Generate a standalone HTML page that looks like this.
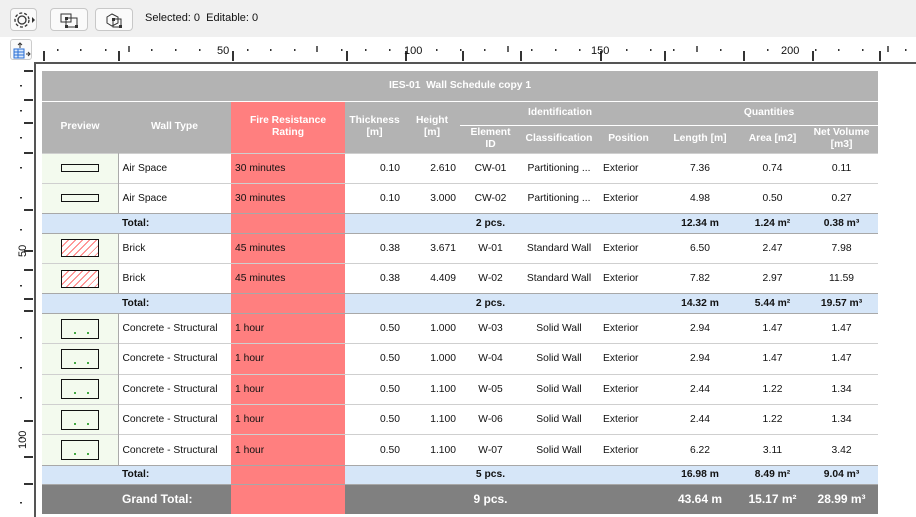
<!DOCTYPE html>
<html><head><meta charset="utf-8"><style>
*{margin:0;padding:0;box-sizing:border-box}
body{width:916px;height:517px;overflow:hidden;background:#fff;font-family:"Liberation Sans",Arial,sans-serif;font-size:11px;color:#111;position:relative}
.tb{position:absolute;left:0;top:0;width:916px;height:37px;background:#f0f0f0}
.btn{position:absolute;top:8px;height:23px;border:1px solid #c8c8c8;border-radius:4px;background:#fafafa}
.abs{position:absolute}
table{position:absolute;left:42px;top:71px;border-collapse:collapse;table-layout:fixed;width:836px}
td{padding:0 4px;white-space:nowrap;overflow:hidden;font-size:10.3px}
.h td{background:#b3b3b3;color:#fff;font-weight:bold;text-align:center;line-height:12px}
.d td{height:30.4px;border-top:1px solid #cfcfcf;background:#fff}
.d td.p{background:#f3faee;border-right:1px solid #aaa;text-align:center}
.t td{height:19.4px;background:#d6e6f8;border-top:1px solid #a8a8a8;font-weight:bold;border-bottom:1px solid #a8a8a8}
.g td{height:29px;background:#808080;color:#fff;font-weight:bold;font-size:12px;border-top:1px solid #fff}
.h td.f,.d td.f,.t td.f,.g td.f{background:#ff7f7f}
.c{text-align:center}.r{text-align:right}
.pos{padding-left:6px}
.sw{display:inline-block;width:38px;height:8px;border:1.5px solid #111;vertical-align:middle}
.br{display:inline-block;width:38px;height:18px;border:1.5px solid #111;vertical-align:middle;background:repeating-linear-gradient(135deg,#fff 0 4px,#f77 4px 5px)}
.cn{display:inline-block;width:38px;height:20px;border:1.5px solid #111;vertical-align:middle;position:relative}
.cn:after{content:"";position:absolute;left:12px;top:12px;width:2px;height:2px;background:#4a4;box-shadow:13px 0 #4a4}
</style></head><body>
<div class="tb">
 <div class="btn" style="left:10px;width:27px;"><svg width="27" height="23" viewBox="0 0 27 23"><circle cx="11" cy="11" r="4" fill="none" stroke="#333" stroke-width="1.3"/><circle cx="11" cy="11" r="7" fill="none" stroke="#333" stroke-width="1.3" stroke-dasharray="3 2"/><path d="M21 8l3 3-3 3z" fill="#333"/></svg></div>
 <div class="btn" style="left:50px;width:38px;"><svg width="38" height="23"><rect x="10" y="5" width="10" height="8" fill="none" stroke="#333"/><rect x="15" y="9" width="11" height="9" fill="none" stroke="#333"/><rect x="14" y="8" width="3" height="3" fill="#333"/><rect x="24" y="16" width="3" height="3" fill="#333"/><rect x="14" y="16" width="3" height="3" fill="#333"/></svg></div>
 <div class="btn" style="left:95px;width:38px;"><svg width="38" height="23"><path d="M11 8l5-3 6 3v6l-6 3-5-3z" fill="none" stroke="#333"/><rect x="17" y="10" width="8" height="8" fill="none" stroke="#333"/><rect x="16" y="9" width="3" height="3" fill="#333"/><rect x="23" y="16" width="3" height="3" fill="#333"/></svg></div>
 <div class="abs" style="left:145px;top:12px;font-size:11px">Selected: 0&nbsp; Editable: 0</div>
</div>
<div class="abs" style="left:10px;top:39px;width:22px;height:21px;border:1px solid #ccc;border-radius:3px;background:#fafafa"><svg width="22" height="21"><path d="M9 3v5M7 5l2-2 2 2" stroke="#333" fill="none"/><rect x="3" y="9" width="10" height="9" fill="#dbe9fb" stroke="#2a6fd6"/><path d="M3 12h10M3 15h10M7 9v9" stroke="#2a6fd6"/><path d="M15 14h4M17 12l2 2-2 2" stroke="#333" fill="none"/></svg></div>
<svg class="abs" style="left:0;top:37px" width="916" height="480">
 <g stroke="#333" stroke-width="2">
  <path d="M44 14v10M119 14v10M233 14v10M347 14v10M406 14v10M463 14v10M521 14v10M601 14v10M665 14v10M744 14v10M813 14v10M880 14v10"/>
 </g>
 <g stroke="#333" stroke-width="1.5">
  <path d="M129 9v6M317 9v6M508 9v6M697 9v6M888 9v6"/>
 </g>
 <g fill="#333">
  <rect x="57" y="12" width="1.5" height="2"/><rect x="80" y="12" width="1.5" height="2"/><rect x="105" y="12" width="1.5" height="2"/><rect x="151" y="12" width="1.5" height="2"/><rect x="175" y="12" width="1.5" height="2"/><rect x="199" y="12" width="1.5" height="2"/><rect x="247" y="12" width="1.5" height="2"/><rect x="270" y="12" width="1.5" height="2"/><rect x="294" y="12" width="1.5" height="2"/><rect x="341" y="12" width="1.5" height="2"/><rect x="365" y="12" width="1.5" height="2"/><rect x="389" y="12" width="1.5" height="2"/><rect x="436" y="12" width="1.5" height="2"/><rect x="460" y="12" width="1.5" height="2"/><rect x="484" y="12" width="1.5" height="2"/><rect x="531" y="12" width="1.5" height="2"/><rect x="555" y="12" width="1.5" height="2"/><rect x="579" y="12" width="1.5" height="2"/><rect x="626" y="12" width="1.5" height="2"/><rect x="650" y="12" width="1.5" height="2"/><rect x="673" y="12" width="1.5" height="2"/><rect x="720" y="12" width="1.5" height="2"/><rect x="767" y="12" width="1.5" height="2"/><rect x="815" y="12" width="1.5" height="2"/><rect x="838" y="12" width="1.5" height="2"/><rect x="862" y="12" width="1.5" height="2"/><rect x="905" y="12" width="1.5" height="2"/>
 </g>
 <g font-family="Liberation Sans" font-size="11" fill="#111">
  <text x="217" y="17">50</text><text x="404" y="17">100</text><text x="591" y="17">150</text><text x="781" y="17">200</text>
 </g>
 <path d="M35 25V480M34 26H916" stroke="#555" stroke-width="2"/>
 <g stroke="#333" stroke-width="2">
  <path d="M24 34h9M24 63h9M24 86h9M24 116h9M24 173h9M24 214h9M24 233h9M24 262h9M24 274h9M24 384h9M24 420h9M24 447h9"/>
 </g>
 <g fill="#333"><rect x="20" y="48" width="2" height="1.5"/><rect x="20" y="73" width="2" height="1.5"/><rect x="20" y="100" width="2" height="1.5"/><rect x="20" y="130" width="2" height="1.5"/><rect x="20" y="160" width="2" height="1.5"/><rect x="20" y="192" width="2" height="1.5"/><rect x="20" y="248" width="2" height="1.5"/><rect x="20" y="300" width="2" height="1.5"/><rect x="20" y="330" width="2" height="1.5"/><rect x="20" y="360" width="2" height="1.5"/><rect x="20" y="400" width="2" height="1.5"/><rect x="20" y="465" width="2" height="1.5"/></g>
 <g font-family="Liberation Sans" font-size="11" fill="#111">
  <text transform="translate(26,220) rotate(-90)">50</text><text transform="translate(26,412) rotate(-90)">100</text>
 </g>
</svg>
<table>
<colgroup><col style="width:76px"><col style="width:113px"><col style="width:114px"><col style="width:59px"><col style="width:56px"><col style="width:61px"><col style="width:76px"><col style="width:63px"><col style="width:80px"><col style="width:65px"><col style="width:73px"></colgroup>
<tr class="h"><td colspan="11" style="height:30px;border-bottom:1px solid #fff">IES-01&nbsp; Wall Schedule copy 1</td></tr>
<tr class="h"><td rowspan="2" style="height:52px">Preview</td><td rowspan="2">Wall Type</td><td rowspan="2" class="f">Fire Resistance<br>Rating</td><td rowspan="2">Thickness<br>[m]</td><td rowspan="2">Height<br>[m]</td><td colspan="3" style="height:24px;border-bottom:1px solid #fff">Identification</td><td colspan="3" style="border-bottom:1px solid #fff">Quantities</td></tr>
<tr class="h"><td style="height:27px">Element<br>ID</td><td>Classification</td><td>Position</td><td>Length [m]</td><td>Area [m2]</td><td>Net Volume<br>[m3]</td></tr>
<tr class="d"><td class="p"><span class="sw"></span></td><td>Air Space</td><td class="f">30 minutes</td><td class="r">0.10</td><td class="r">2.610</td><td class="c">CW-01</td><td class="c">Partitioning ...</td><td class="pos">Exterior</td><td class="c">7.36</td><td class="c">0.74</td><td class="c">0.11</td></tr>
<tr class="d"><td class="p"><span class="sw"></span></td><td>Air Space</td><td class="f">30 minutes</td><td class="r">0.10</td><td class="r">3.000</td><td class="c">CW-02</td><td class="c">Partitioning ...</td><td class="pos">Exterior</td><td class="c">4.98</td><td class="c">0.50</td><td class="c">0.27</td></tr>
<tr class="t"><td></td><td>Total:</td><td class="f"></td><td></td><td></td><td class="c">2 pcs.</td><td></td><td></td><td class="c">12.34 m</td><td class="c">1.24 m²</td><td class="c">0.38 m³</td></tr>
<tr class="d"><td class="p"><span class="br"></span></td><td>Brick</td><td class="f">45 minutes</td><td class="r">0.38</td><td class="r">3.671</td><td class="c">W-01</td><td class="c">Standard Wall</td><td class="pos">Exterior</td><td class="c">6.50</td><td class="c">2.47</td><td class="c">7.98</td></tr>
<tr class="d"><td class="p"><span class="br"></span></td><td>Brick</td><td class="f">45 minutes</td><td class="r">0.38</td><td class="r">4.409</td><td class="c">W-02</td><td class="c">Standard Wall</td><td class="pos">Exterior</td><td class="c">7.82</td><td class="c">2.97</td><td class="c">11.59</td></tr>
<tr class="t"><td></td><td>Total:</td><td class="f"></td><td></td><td></td><td class="c">2 pcs.</td><td></td><td></td><td class="c">14.32 m</td><td class="c">5.44 m²</td><td class="c">19.57 m³</td></tr>
<tr class="d"><td class="p"><span class="cn"></span></td><td>Concrete - Structural</td><td class="f">1 hour</td><td class="r">0.50</td><td class="r">1.000</td><td class="c">W-03</td><td class="c">Solid Wall</td><td class="pos">Exterior</td><td class="c">2.94</td><td class="c">1.47</td><td class="c">1.47</td></tr>
<tr class="d"><td class="p"><span class="cn"></span></td><td>Concrete - Structural</td><td class="f">1 hour</td><td class="r">0.50</td><td class="r">1.000</td><td class="c">W-04</td><td class="c">Solid Wall</td><td class="pos">Exterior</td><td class="c">2.94</td><td class="c">1.47</td><td class="c">1.47</td></tr>
<tr class="d"><td class="p"><span class="cn"></span></td><td>Concrete - Structural</td><td class="f">1 hour</td><td class="r">0.50</td><td class="r">1.100</td><td class="c">W-05</td><td class="c">Solid Wall</td><td class="pos">Exterior</td><td class="c">2.44</td><td class="c">1.22</td><td class="c">1.34</td></tr>
<tr class="d"><td class="p"><span class="cn"></span></td><td>Concrete - Structural</td><td class="f">1 hour</td><td class="r">0.50</td><td class="r">1.100</td><td class="c">W-06</td><td class="c">Solid Wall</td><td class="pos">Exterior</td><td class="c">2.44</td><td class="c">1.22</td><td class="c">1.34</td></tr>
<tr class="d"><td class="p"><span class="cn"></span></td><td>Concrete - Structural</td><td class="f">1 hour</td><td class="r">0.50</td><td class="r">1.100</td><td class="c">W-07</td><td class="c">Solid Wall</td><td class="pos">Exterior</td><td class="c">6.22</td><td class="c">3.11</td><td class="c">3.42</td></tr>
<tr class="t"><td></td><td>Total:</td><td class="f"></td><td></td><td></td><td class="c">5 pcs.</td><td></td><td></td><td class="c">16.98 m</td><td class="c">8.49 m²</td><td class="c">9.04 m³</td></tr>
<tr class="g"><td></td><td>Grand Total:</td><td class="f"></td><td></td><td></td><td class="c">9 pcs.</td><td></td><td></td><td class="c">43.64 m</td><td class="c">15.17 m²</td><td class="c">28.99 m³</td></tr>
</table>
</body></html>
